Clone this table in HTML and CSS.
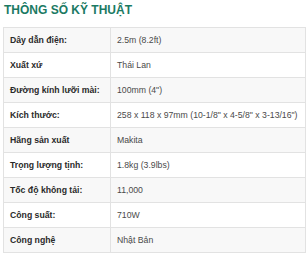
FILE: index.html
```html
<!DOCTYPE html>
<html lang="vi">
<head>
<meta charset="utf-8">
<link rel="stylesheet" href="styles.css">
</head>
<body>
<div class="specs">
  <h2 class="title">THÔNG SỐ KỸ THUẬT</h2>
  <table class="spec-table">
    <tbody>
      <tr><th>Dây dẫn điện:</th><td>2.5m (8.2ft)</td></tr>
      <tr><th>Xuất xứ</th><td>Thái Lan</td></tr>
      <tr><th>Đường kính lưỡi mài:</th><td>100mm (4")</td></tr>
      <tr><th>Kích thước:</th><td>258 x 118 x 97mm (10-1/8" x 4-5/8" x 3-13/16")</td></tr>
      <tr><th>Hãng sản xuất</th><td>Makita</td></tr>
      <tr><th>Trọng lượng tịnh:</th><td>1.8kg (3.9lbs)</td></tr>
      <tr><th>Tốc độ không tải:</th><td>11,000</td></tr>
      <tr><th>Công suất:</th><td>710W</td></tr>
      <tr><th>Công nghệ</th><td>Nhật Bản</td></tr>
    </tbody>
  </table>
</div>
</body>
</html>
```
FILE: styles.css
```css
html, body {
  margin: 0;
  padding: 0;
  background: #ffffff;
}
body {
  font-family: "Liberation Sans", Arial, sans-serif;
}
.specs {
  padding: 3px 1px 0 3px;
}
.title {
  margin: 0 0 9px 1px;
  font-size: 12px;
  line-height: 15px;
  font-weight: bold;
  color: #1b7a63;
}
.spec-table {
  width: 100%;
  border-collapse: collapse;
  font-size: 8.7px;
}
.spec-table th,
.spec-table td {
  border: 1px solid #e2e2e2;
  height: 24px;
  padding: 0 6px;
  text-align: left;
  vertical-align: middle;
  line-height: 12px;
  white-space: nowrap;
}
.spec-table th {
  width: 94px;
  font-weight: bold;
  color: #2a2a2a;
}
.spec-table td {
  color: #4a4a4a;
}
.spec-table tr:nth-child(odd) {
  background: #f8f8f8;
}
```
